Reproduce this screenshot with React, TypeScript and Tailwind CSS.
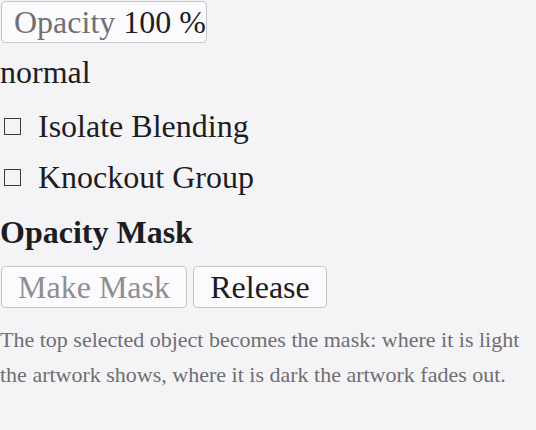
export default function App() {
  return (
    <div className="min-h-[430px] w-[536px] bg-[#f4f4f6] text-[#1d1d1f] font-[family-name:'Liberation_Serif',serif] text-[32px] leading-none">
      <div className="flex flex-col items-start">
        <div className="mt-px ml-px flex h-[42px] w-[206px] items-center rounded-[4px] border border-[#c6c6c8] bg-[#fbfbfd] pl-[12px]">
          <span className="text-[#707073]">Opacity</span>
          <span className="ml-[8px]">100 %</span>
        </div>
        <div className="mt-[13px] h-[30px]">normal</div>
        <label className="mt-[25px] flex h-[30px] items-center">
          <span className="ml-[4px] inline-block h-[17px] w-[17px] border-[1.5px] border-[#3a3a3c]" />
          <span className="ml-[17px]">Isolate Blending</span>
        </label>
        <label className="mt-[21px] flex h-[30px] items-center">
          <span className="ml-[4px] inline-block h-[17px] w-[17px] border-[1.5px] border-[#3a3a3c]" />
          <span className="ml-[17px]">Knockout Group</span>
        </label>
        <div className="mt-[24px] h-[30px] font-bold">Opacity Mask</div>
        <div className="mt-[20px] flex gap-[6px] pl-px">
          <button className="h-[42px] w-[186px] rounded-[4px] border border-[#c6c6c8] bg-[#fbfbfd] text-[#8e8e93]">
            Make Mask
          </button>
          <button className="h-[42px] w-[134px] rounded-[4px] border border-[#c6c6c8] bg-[#fbfbfd]">
            Release
          </button>
        </div>
        <p className="mt-[14px] text-[22px] leading-[35px] text-[#6e6e73]">
          The top selected object becomes the mask: where it is light the artwork shows, where it is dark the artwork fades out.
        </p>
      </div>
    </div>
  );
}
